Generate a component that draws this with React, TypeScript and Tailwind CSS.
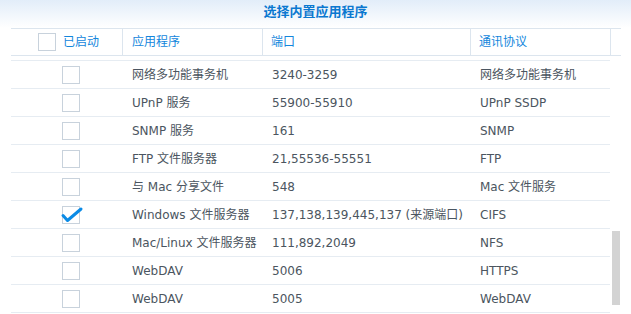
const rows = [
	{ app: '网络多功能事务机', port: '3240-3259', proto: '网络多功能事务机', on: false },
	{ app: 'UPnP 服务', port: '55900-55910', proto: 'UPnP SSDP', on: false },
	{ app: 'SNMP 服务', port: '161', proto: 'SNMP', on: false },
	{ app: 'FTP 文件服务器', port: '21,55536-55551', proto: 'FTP', on: false },
	{ app: '与 Mac 分享文件', port: '548', proto: 'Mac 文件服务', on: false },
	{ app: 'Windows 文件服务器', port: '137,138,139,445,137 (来源端口)', proto: 'CIFS', on: true },
	{ app: 'Mac/Linux 文件服务器', port: '111,892,2049', proto: 'NFS', on: false },
	{ app: 'WebDAV', port: '5006', proto: 'HTTPS', on: false },
	{ app: 'WebDAV', port: '5005', proto: 'WebDAV', on: false },
];

function Checkbox({ checked }: { checked?: boolean }) {
	return (
		<div className="relative w-[18px] h-[18px] border border-[#c8d2dc] bg-white">
			{checked && (
				<svg className="absolute left-[-1px] top-[-1px] overflow-visible" width="22" height="18" viewBox="0 0 22 18">
					<path d="M1 9.5 L5.5 14.5 L19 3" fill="none" stroke="#0b8be6" strokeWidth="3" strokeLinecap="round" strokeLinejoin="round" />
				</svg>
			)}
		</div>
	);
}

export default function App() {
	return (
		<div
			className="relative w-[631px] h-[314px] overflow-hidden bg-white text-[12px] text-[#4b5560]"
			style={{ fontFamily: '"DejaVu Sans", "Noto Sans CJK SC", sans-serif' }}
		>
			<div className="h-[28px] flex items-center justify-center bg-gradient-to-b from-[#e2edf9] to-white">
				<span className="text-[13px] font-bold text-[#0b78d0] -mt-[4px]">选择内置应用程序</span>
			</div>

			<div className="ml-[11px] w-[610px] h-[28px] flex border-y border-[#dce5ee] text-[#1386dc]">
				<div className="w-[112px] flex items-center pl-[27px] gap-[7px] border-r border-[#dce5ee]">
					<Checkbox />
					<span>已启动</span>
				</div>
				<div className="w-[140px] flex items-center pl-[9px] border-r border-[#dce5ee]">应用程序</div>
				<div className="w-[208px] flex items-center pl-[8px] border-r border-[#dce5ee]">端口</div>
				<div className="w-[140px] flex items-center pl-[8px] border-r border-[#dce5ee]">通讯协议</div>
				<div className="flex-1" />
			</div>

			<div className="ml-[11px] mt-[4px] w-[599px] border-t border-[#e6ecf2]">
				{rows.map((r, i) => (
					<div key={i} className="h-[28px] flex items-center border-b border-[#e6ecf2]">
						<div className="w-[112px] pl-[51px]">
							<Checkbox checked={r.on} />
						</div>
						<div className="w-[140px] pl-[9px] whitespace-nowrap">{r.app}</div>
						<div className="w-[208px] pl-[9px] whitespace-nowrap">{r.port}</div>
						<div className="w-[139px] pl-[9px] whitespace-nowrap">{r.proto}</div>
					</div>
				))}
			</div>

			<div className="absolute left-[612px] top-[231px] w-[8px] h-[74px] bg-[#d3d3d3]" />
		</div>
	);
}
